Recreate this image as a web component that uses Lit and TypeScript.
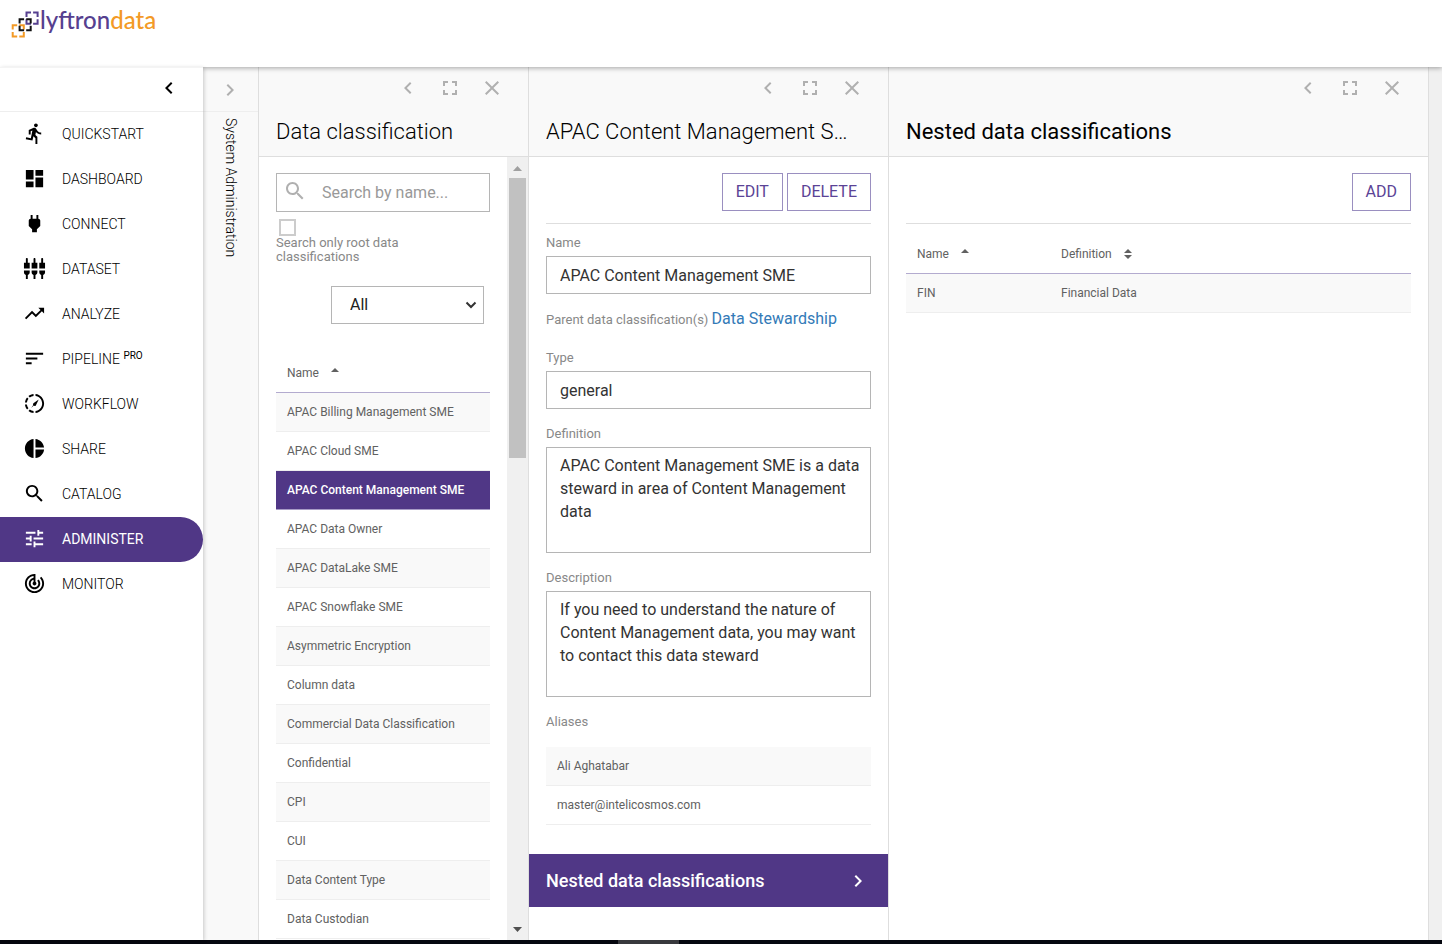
import { LitElement, html, svg, css, nothing } from "lit";
import { customElement, property, state } from "lit/decorators.js";
import { classMap } from "lit/directives/class-map.js";

const ICONS: Record<string, string> = {
  run: "M13.49 5.48c1.1 0 2-.9 2-2s-.9-2-2-2-2 .9-2 2 .9 2 2 2zm-3.6 13.9l1-4.4 2.1 2v6h2v-7.5l-2.1-2 .6-3c1.3 1.5 3.3 2.5 5.5 2.5v-2c-1.9 0-3.5-1-4.3-2.4l-1-1.6c-.4-.6-1-1-1.7-1-.3 0-.5.1-.8.1l-5.2 2.2v4.7h2v-3.4l1.8-.7-1.6 8.1-4.9-1-.4 2 7 1.4z",
  dashboard: "M3 13h8V3H3v10zm0 8h8v-6H3v6zm10 0h8V11h-8v10zm0-18v6h8V3h-8z",
  power: "M16.01 7L16 3h-2v4h-4V3H8v4h-.01C7 6.99 6 7.99 6 8.99v5.49L9.5 18v3h5v-3l3.5-3.51v-5.5c0-1-1-2-1.99-1.99z",
  composite: "M5 2c0-.55-.45-1-1-1s-1 .45-1 1v4H1v6h6V6H5V2zm4 14c0 1.3.84 2.4 2 2.82V23h2v-4.18c1.16-.41 2-1.51 2-2.82v-2H9v2zm-8 0c0 1.3.84 2.4 2 2.82V23h2v-4.18C6.16 18.4 7 17.3 7 16v-2H1v2zM21 6V2c0-.55-.45-1-1-1s-1 .45-1 1v4h-2v6h6V6h-2zm-8-4c0-.55-.45-1-1-1s-1 .45-1 1v4H9v6h6V6h-2V2zm4 14c0 1.3.84 2.4 2 2.82V23h2v-4.18c1.16-.41 2-1.51 2-2.82v-2h-6v2z",
  trending: "M16 6l2.29 2.29-4.88 4.88-4-4L2 16.59 3.41 18l6-6 4 4 6.3-6.29L22 12V6z",
  sort: "M3 18h6v-2H3v2zM3 6v2h18V6H3zm0 7h12v-2H3v2z",
  motion: "M16.4 7.8l-2.9 5.9c-.5 1-1.6 1.1-2.2.5l-2.8 2.6 2.2-3.2c-.5-.7-.3-1.7.5-2.2zM11 4.07V2.05c-2.01.2-3.84 1-5.32 2.21L7.1 5.69c1.11-.86 2.44-1.44 3.9-1.62zM5.69 7.1L4.26 5.68C3.05 7.16 2.25 8.99 2.05 11h2.02c.18-1.46.76-2.79 1.62-3.9zM4.07 13H2.05c.2 2.01 1 3.84 2.21 5.32l1.43-1.43c-.86-1.1-1.44-2.43-1.62-3.89zm1.61 6.74C7.16 20.95 9 21.75 11 21.95v-2.02c-1.46-.18-2.79-.76-3.9-1.62l-1.42 1.43zM22 12c0 5.16-3.92 9.42-8.95 9.95v-2.02C16.97 19.41 20 16.05 20 12s-3.03-7.41-6.95-7.93V2.05C18.08 2.58 22 6.84 22 12z",
  pie: "M11 2v20c-5.07-.5-9-4.79-9-10s3.93-9.5 9-10zm2.03 0v8.99H22c-.47-4.74-4.24-8.52-8.97-8.99zm0 11.01V22c4.74-.47 8.5-4.25 8.97-8.99h-8.97z",
  search: "M15.5 14h-.79l-.28-.27C15.41 12.59 16 11.11 16 9.5 16 5.91 13.09 3 9.5 3S3 5.91 3 9.5 5.91 16 9.5 16c1.61 0 3.09-.59 4.23-1.57l.27.28v.79l5 4.99L20.49 19l-4.99-5zm-6 0C7.01 14 5 11.99 5 9.5S7.01 5 9.5 5 14 7.01 14 9.5 11.99 14 9.5 14z",
  tune: "M3 17v2h6v-2H3zM3 5v2h10V5H3zm10 16v-2h8v-2h-8v-2h-2v6h2zM7 9v2H3v2h4v2h2V9H7zm14 4v-2H11v2h10zm-6-4h2V7h4V5h-4V3h-2v6z",
  track: "M19.07 4.93l-1.41 1.41C19.1 7.79 20 9.79 20 12c0 4.42-3.58 8-8 8s-8-3.58-8-8c0-4.08 3.05-7.44 7-7.93v2.02C8.16 6.57 6 9.03 6 12c0 3.31 2.69 6 6 6s6-2.69 6-6c0-1.66-.67-3.16-1.76-4.24l-1.41 1.41C15.55 9.9 16 10.9 16 12c0 2.21-1.79 4-4 4s-4-1.79-4-4c0-1.86 1.28-3.41 3-3.86v2.14c-.6.35-1 .98-1 1.72 0 1.1.9 2 2 2s2-.9 2-2c0-.74-.4-1.38-1-1.72V2h-1C6.48 2 2 6.48 2 12s4.48 10 10 10 10-4.48 10-10c0-2.76-1.12-5.26-2.93-7.07z",
  left: "M15.41 7.41L14 6l-6 6 6 6 1.41-1.41L10.83 12z",
  right: "M10 6L8.59 7.41 13.17 12l-4.58 4.59L10 18l6-6z",
  fullscreen: "M7 14H5v5h5v-2H7v-3zm-2-4h2V7h3V5H5v5zm12 7h-3v2h5v-5h-2v3zM14 5v2h3v3h2V5h-5z",
  close: "M19 6.41L17.59 5 12 10.59 6.41 5 5 6.41 10.59 12 5 17.59 6.41 19 12 13.41 17.59 19 19 17.59 13.41 12z",
};

const icon = (name: string) => html`
  <svg class="icon" viewBox="0 0 24 24" aria-hidden="true">${svg`<path d=${ICONS[name]} />`}</svg>
`;

const base = css`
  *,
  *::before,
  *::after {
    box-sizing: border-box;
  }
  button,
  input,
  textarea,
  select {
    font: inherit;
    color: inherit;
    margin: 0;
    border-radius: 0;
  }
  button {
    background: none;
    border: 0;
    padding: 0;
    cursor: pointer;
  }
  .icon {
    display: block;
    fill: currentColor;
    width: 24px;
    height: 24px;
    flex: none;
  }
`;

const tableStyles = css`
  .table {
    width: 100%;
    border-collapse: separate;
    border-spacing: 0;
    font-size: 12px;
    line-height: 16px;
    color: #616161;
    text-align: left;
  }
  .table th {
    height: 39px;
    padding: 0 11px;
    font-weight: 400;
    border-bottom: 1px solid #b3abcf;
  }
  .table td {
    height: 39px;
    padding: 0 11px;
    border-bottom: 1px solid #eeeeee;
  }
  .table tbody tr:nth-child(odd) td {
    background: #f9f9f9;
  }
  .table tbody tr.selected td {
    background: #503786;
    border-color: #a79bc6;
    color: #fff;
    font-weight: 500;
  }
  .sort {
    display: inline-flex;
    align-items: center;
    gap: 12px;
  }
  .sort svg {
    width: 8px;
    height: 10px;
    fill: #616161;
  }
`;

const sortButton = (label: string, both = false) => html`
  <button class="sort" type="button">
    ${label}
    <svg viewBox="0 0 8 10" aria-hidden="true">
      <path d="M4 0L8 4H0z" />
      ${both ? svg`<path d="M0 6h8L4 10z" />` : nothing}
    </svg>
  </button>
`;

@customElement("side-nav")
export class SideNav extends LitElement {
  @state() private active = "ADMINISTER";

  private items: Array<[string, string, string?]> = [
    ["run", "QUICKSTART"],
    ["dashboard", "DASHBOARD"],
    ["power", "CONNECT"],
    ["composite", "DATASET"],
    ["trending", "ANALYZE"],
    ["sort", "PIPELINE", "PRO"],
    ["motion", "WORKFLOW"],
    ["pie", "SHARE"],
    ["search", "CATALOG"],
    ["tune", "ADMINISTER"],
    ["track", "MONITOR"],
  ];

  static styles = [
    base,
    css`
      :host {
        display: block;
        background: #fff;
      }
      .collapse {
        display: flex;
        justify-content: flex-end;
        align-items: center;
        height: 45px;
        padding: 0 22px 3px 0;
        border-bottom: 1px solid #eeeeee;
        border-top: 1px solid #f4f4f4;
      }
      .item {
        display: flex;
        align-items: center;
        gap: 16px;
        height: 45px;
        padding: 0 0 2px 23px;
        font-size: 14px;
        line-height: 20px;
        font-weight: 300;
        color: #000;
        text-decoration: none;
      }
      .item .icon {
        width: 23px;
        height: 23px;
      }
      .active {
        background: #503786;
        color: #fff;
        font-weight: 400;
        border-radius: 0 23px 23px 0;
      }
      .badge {
        font-size: 10px;
        line-height: 10px;
        vertical-align: 5px;
        font-weight: 400;
      }
    `,
  ];

  render() {
    return html`
      <div class="collapse"><button type="button" aria-label="Collapse menu">${icon("left")}</button></div>
      <nav>
        ${this.items.map(
          ([glyph, label, badge]) => html`
            <a
              href="#"
              class=${classMap({ item: true, active: label === this.active })}
              @click=${(e: Event) => {
                e.preventDefault();
                this.active = label;
              }}
              >${icon(glyph)}<span>${label}${badge ? html` <span class="badge">${badge}</span>` : nothing}</span></a
            >
          `,
        )}
      </nav>
    `;
  }
}

@customElement("app-panel")
export class AppPanel extends LitElement {
  @property() heading = "";
  @property({ type: Boolean }) strong = false;

  static styles = [
    base,
    css`
      :host {
        display: flex;
        flex-direction: column;
        min-width: 0;
        min-height: 0;
        background: #fff;
        border-right: 1px solid #dedede;
      }
      .head {
        flex: none;
        background: #f9f9f9;
        border-bottom: 1px solid #dedede;
        padding: 9px 17px 8px;
      }
      .tools {
        display: flex;
        justify-content: flex-end;
        gap: 18px;
        padding-right: 7px;
        color: #b0b0b0;
      }
      .title {
        margin: 15px 10px 0 0;
        font-size: 22px;
        line-height: 33px;
        font-weight: 300;
        color: #000;
        white-space: nowrap;
        overflow: hidden;
        text-overflow: ellipsis;
      }
      .strong {
        font-weight: 400;
      }
      .body {
        flex: 1;
        min-height: 0;
        display: flex;
        flex-direction: column;
      }
    `,
  ];

  render() {
    return html`
      <header class="head">
        <div class="tools">
          <button type="button" aria-label="Collapse">${icon("left")}</button>
          <button type="button" aria-label="Full screen">${icon("fullscreen")}</button>
          <button type="button" aria-label="Close">${icon("close")}</button>
        </div>
        <h2 class=${classMap({ title: true, strong: this.strong })}>${this.heading}</h2>
      </header>
      <div class="body"><slot></slot></div>
    `;
  }
}

@customElement("classification-list")
export class ClassificationList extends LitElement {
  @state() private selected = "APAC Content Management SME";

  private names = [
    "APAC Billing Management SME",
    "APAC Cloud SME",
    "APAC Content Management SME",
    "APAC Data Owner",
    "APAC DataLake SME",
    "APAC Snowflake SME",
    "Asymmetric Encryption",
    "Column data",
    "Commercial Data Classification",
    "Confidential",
    "CPI",
    "CUI",
    "Data Content Type",
    "Data Custodian",
  ];

  static styles = [
    base,
    tableStyles,
    css`
      :host {
        flex: 1;
        min-height: 0;
        display: flex;
      }
      .content {
        flex: 1;
        min-width: 0;
        overflow: hidden;
        padding: 16px 17px 0;
      }
      .search {
        display: flex;
        align-items: center;
        height: 39px;
        border: 1px solid #b5b5b5;
        padding: 0 6px;
        gap: 15px;
        color: #b0b0b0;
      }
      .search .icon {
        margin-bottom: 4px;
      }
      .search input {
        flex: 1;
        min-width: 0;
        border: 0;
        outline: 0;
        padding: 0;
        background: none;
        font-size: 16px;
        line-height: 20px;
        color: #333;
      }
      .search input::placeholder {
        color: #999;
        opacity: 1;
      }
      .root {
        display: block;
        width: 150px;
        margin-top: 7px;
        font-size: 13px;
        line-height: 14px;
        color: #888;
      }
      .root input {
        appearance: none;
        display: block;
        width: 17px;
        height: 17px;
        margin: 0 3px;
        border: 2px solid #cccccc;
        background: #fff;
      }
      .filter {
        display: flex;
        justify-content: flex-end;
        margin: 22px 6px 0 0;
      }
      .pick {
        display: grid;
        width: 153px;
        align-items: center;
      }
      .pick > * {
        grid-area: 1 / 1;
      }
      .pick select {
        appearance: none;
        height: 38px;
        border: 1px solid #b5b5b5;
        background: none;
        padding: 0 18px;
        font-size: 16px;
        line-height: 20px;
        color: #212121;
      }
      .pick svg {
        justify-self: end;
        margin-right: 7px;
        width: 12px;
        height: 8px;
        fill: none;
        stroke: #333;
        stroke-width: 2;
        pointer-events: none;
      }
      .table {
        margin-top: 30px;
      }
      .bar {
        flex: none;
        width: 21px;
        background: #f0f0f0;
        display: flex;
        flex-direction: column;
        align-items: center;
        padding: 9px 0 8px;
      }
      .bar svg {
        display: block;
        width: 9px;
        height: 5px;
        fill: #a0a0a0;
      }
      .bar .down {
        fill: #505050;
        margin-top: auto;
      }
      .thumb {
        width: 17px;
        height: 280px;
        margin-top: 7px;
        background: #c1c1c1;
      }
    `,
  ];

  render() {
    return html`
      <div class="content">
        <label class="search">${icon("search")}<input type="text" placeholder="Search by name..." aria-label="Search by name" /></label>
        <label class="root"><input type="checkbox" />Search only root data classifications</label>
        <div class="filter">
          <div class="pick">
            <select aria-label="Type filter">
              <option>All</option>
            </select>
            <svg viewBox="0 0 12 8" aria-hidden="true"><path d="M1.5 1.5L6 6l4.5-4.5" /></svg>
          </div>
        </div>
        <table class="table">
          <thead>
            <tr>
              <th>${sortButton("Name")}</th>
            </tr>
          </thead>
          <tbody>
            ${this.names.map(
              (n) => html`
                <tr class=${classMap({ selected: n === this.selected })} @click=${() => (this.selected = n)}>
                  <td>${n}</td>
                </tr>
              `,
            )}
          </tbody>
        </table>
      </div>
      <div class="bar">
        <svg viewBox="0 0 9 5"><path d="M4.5 0L9 5H0z" /></svg>
        <div class="thumb"></div>
        <svg class="down" viewBox="0 0 9 5"><path d="M0 0h9L4.5 5z" /></svg>
      </div>
    `;
  }
}

const detailStyles = css`
  .actions {
    display: flex;
    justify-content: flex-end;
    gap: 4px;
    padding: 16px 0 12px;
    border-bottom: 1px solid #dedede;
  }
  .action {
    height: 38px;
    padding: 0 13px;
    border: 1px solid #9a8fc0;
    font-size: 16px;
    line-height: 20px;
    color: #5b4396;
  }
`;

@customElement("classification-detail")
export class ClassificationDetail extends LitElement {
  static styles = [
    base,
    tableStyles,
    detailStyles,
    css`
      :host {
        display: block;
      }
      .form {
        padding: 0 17px;
      }
      .fields {
        display: flex;
        flex-direction: column;
        gap: 15px;
        padding-top: 9px;
      }
      .field {
        display: flex;
        flex-direction: column;
        gap: 3px;
      }
      .label {
        font-size: 13px;
        line-height: 20px;
        color: #888;
      }
      .box {
        width: 100%;
        height: 38px;
        border: 1px solid #b5b5b5;
        background: #fff;
        padding: 0 8px 0 13px;
        font-size: 16px;
        line-height: 23px;
        color: #333;
        display: block;
      }
      .area {
        height: 106px;
        padding-top: 6px;
        resize: none;
        overflow: hidden;
      }
      .parent {
        margin: 0 0 3px;
      }
      .link {
        font-size: 16px;
        color: #337ab7;
        text-decoration: none;
      }
      .aliases {
        margin-top: 15px;
      }
      .nested {
        display: flex;
        align-items: center;
        justify-content: space-between;
        width: 100%;
        height: 53px;
        margin-top: 29px;
        padding: 0 18px 0 17px;
        background: #503786;
        color: #fff;
        font-size: 18px;
        line-height: 24px;
        font-weight: 500;
      }
    `,
  ];

  render() {
    return html`
      <div class="form">
        <div class="actions">
          <button class="action" type="button">EDIT</button>
          <button class="action" type="button">DELETE</button>
        </div>
        <div class="fields">
          <div class="field">
            <label class="label" for="name">Name</label>
            <input class="box" id="name" readonly .value=${"APAC Content Management SME"} />
          </div>
          <p class="label parent">Parent data classification(s) <a class="link" href="#">Data Stewardship</a></p>
          <div class="field">
            <label class="label" for="type">Type</label>
            <input class="box" id="type" readonly .value=${"general"} />
          </div>
          <div class="field">
            <label class="label" for="definition">Definition</label>
            <textarea class="box area" id="definition" readonly .value=${"APAC Content Management SME is a data steward in area of Content Management data"}></textarea>
          </div>
          <div class="field">
            <label class="label" for="description">Description</label>
            <textarea class="box area" id="description" readonly .value=${"If you need to understand the nature of Content Management data, you may want to contact this data steward"}></textarea>
          </div>
          <div class="label" id="aliases">Aliases</div>
        </div>
        <table class="table aliases" aria-labelledby="aliases">
          <tbody>
            <tr>
              <td>Ali Aghatabar</td>
            </tr>
            <tr>
              <td>master@intelicosmos.com</td>
            </tr>
          </tbody>
        </table>
      </div>
      <button class="nested" type="button">Nested data classifications ${icon("right")}</button>
    `;
  }
}

@customElement("nested-list")
export class NestedList extends LitElement {
  static styles = [
    base,
    tableStyles,
    detailStyles,
    css`
      :host {
        display: block;
        padding: 0 17px;
      }
      .table {
        margin-top: 11px;
        table-layout: fixed;
      }
      .table th:first-child {
        width: 144px;
      }
    `,
  ];

  render() {
    return html`
      <div class="actions"><button class="action" type="button">ADD</button></div>
      <table class="table">
        <thead>
          <tr>
            <th>${sortButton("Name")}</th>
            <th>${sortButton("Definition", true)}</th>
          </tr>
        </thead>
        <tbody>
          <tr>
            <td>FIN</td>
            <td>Financial Data</td>
          </tr>
        </tbody>
      </table>
    `;
  }
}

@customElement("app-root")
export class AppRoot extends LitElement {
  static styles = [
    base,
    css`
      :host {
        display: flex;
        flex-direction: column;
        height: 100vh;
        overflow: hidden;
        background: #fff;
        font-family: Roboto, "Liberation Sans", sans-serif;
      }
      .top {
        flex: none;
        position: relative;
        z-index: 1;
        height: 67px;
        padding: 5px 11px;
        background: #fff;
        box-shadow: 0 1px 5px rgba(0, 0, 0, 0.35);
      }
      .brand {
        display: flex;
        align-items: flex-start;
        gap: 1px;
        font-family: Lato, sans-serif;
        font-size: 24px;
        line-height: 30px;
        font-weight: 500;
        color: #56408f;
        text-decoration: none;
      }
      .mark {
        flex: none;
        width: 28px;
        height: 33px;
        fill: none;
        stroke-width: 2;
      }
      .accent {
        color: #f39a26;
      }
      .main {
        flex: 1;
        min-height: 0;
        display: flex;
        background: #f0f0f0;
      }
      .nav {
        flex: none;
        width: 203px;
        position: relative;
        z-index: 2;
        box-shadow: 1px 1px 4px rgba(0, 0, 0, 0.2);
      }
      .strip {
        flex: none;
        width: 56px;
        background: #f9f9f9;
        border-right: 1px solid #dedede;
      }
      .expand {
        display: flex;
        align-items: center;
        justify-content: center;
        width: 100%;
        height: 45px;
        padding: 2px 1px 0 0;
        border-bottom: 1px solid #eeeeee;
        color: #b0b0b0;
      }
      .crumb {
        display: flex;
        align-items: center;
        width: 100%;
        padding-top: 6px;
        line-height: 20px;
        font-size: 14px;
        font-weight: 300;
        color: #000;
        writing-mode: vertical-rl;
      }
      .list {
        flex: 0 0 270px;
      }
      .detail {
        flex: 0 0 360px;
      }
      .rest {
        flex: 1;
        margin-right: 13px;
      }
      .taskbar {
        flex: none;
        height: 4px;
        background: #05070f;
        display: flex;
        justify-content: center;
      }
      .task {
        width: 61px;
        margin-right: 145px;
        background: #38393d;
      }
    `,
  ];

  private bracket(x: number, y: number, color: string) {
    return svg`<path transform="translate(${x} ${y})" stroke=${color}
      d="M0 4.3V0H4.5M6.6 0h4.500V4.3M11.1 6.6v4.500H6.6M4.500 11.100H0V6.6" />`;
  }

  render() {
    return html`
      <header class="top">
        <a class="brand" href="#">
          <svg class="mark" viewBox="0 0 28 33" aria-hidden="true">
            ${this.bracket(1.7, 20.3, "#f39a26")} ${this.bracket(15.5, 7.6, "#56408f")} ${this.bracket(8.6, 14.2, "#111")}
          </svg>
          <span>lyftron<span class="accent">data</span></span>
        </a>
      </header>
      <div class="main">
        <side-nav class="nav"></side-nav>
        <aside class="strip">
          <button class="expand" type="button" aria-label="Expand System Administration">${icon("right")}</button>
          <div class="crumb">System Administration</div>
        </aside>
        <app-panel class="list" heading="Data classification"><classification-list></classification-list></app-panel>
        <app-panel class="detail" heading="APAC Content Management SME"><classification-detail></classification-detail></app-panel>
        <app-panel class="rest" heading="Nested data classifications" strong><nested-list></nested-list></app-panel>
      </div>
      <div class="taskbar"><div class="task"></div></div>
    `;
  }
}
